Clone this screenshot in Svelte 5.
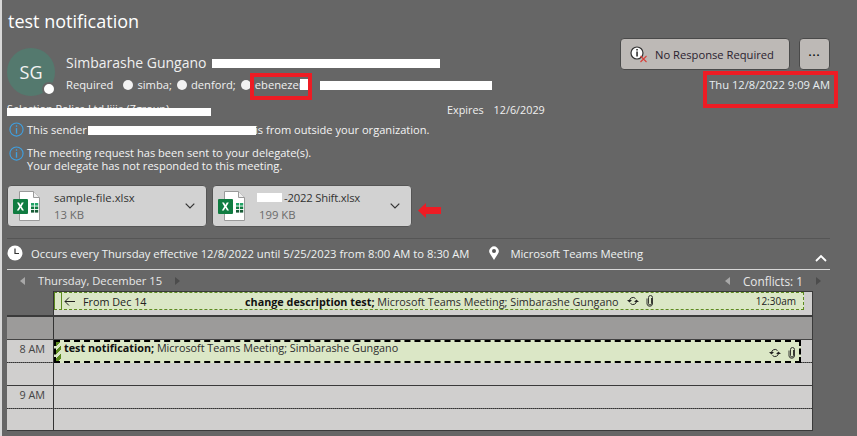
<script lang="ts">
  let redactions = [
    { x: 210, y: 59, w: 228, h: 9 },
    { x: 298, y: 79, w: 9, h: 11 },
    { x: 318, y: 81, w: 172, h: 9 },
    { x: 5, y: 108, w: 204, h: 8 },
    { x: 86, y: 126, w: 168, h: 9 },
    { x: 255, y: 193, w: 25, h: 9 }
  ];
</script>

{#snippet xlsx()}
  <svg class="xl" width="28" height="32" viewBox="0 0 28 32">
    <path d="M6.5 1.5h14l6 6v23h-20z" fill="#fff" stroke="#9a9a9a" />
    <path d="M20.5 1.5v6h6" fill="#eee" stroke="#9a9a9a" />
    <rect x="18" y="13" width="3.2" height="2.6" fill="#21a366" />
    <rect x="22" y="13" width="3.2" height="2.6" fill="#21a366" />
    <rect x="18" y="16.5" width="3.2" height="2.6" fill="#107c41" />
    <rect x="22" y="16.5" width="3.2" height="2.6" fill="#107c41" />
    <rect x="18" y="20" width="3.2" height="2.6" fill="#185c37" />
    <rect x="22" y="20" width="3.2" height="2.6" fill="#185c37" />
    <rect x="0" y="9" width="15" height="15" rx="1" fill="#107c41" />
    <path d="M4 12.5l2.3 4-2.5 4h2l1.6-2.8 1.6 2.8h2l-2.5-4 2.3-4h-2l-1.4 2.6-1.4-2.6z" fill="#fff" />
  </svg>
{/snippet}

{#snippet chevron()}
  <svg class="chev" width="10" height="6" viewBox="0 0 10 6"><path d="M.7.7L5 5l4.300-4.300" fill="none" stroke="#333" stroke-width="1.200" /></svg>
{/snippet}

{#snippet recur()}
  <svg class="recur" width="12" height="10" viewBox="0 0 12 10">
    <path d="M2.500 5a3.500 3.500 0 0 1 6-2.500M9.500 5a3.500 3.500 0 0 1-6 2.500" fill="none" stroke="#222" />
    <path d="M0 4h5L2.500 6.500zM7 6h5L9.500 3.500z" fill="#222" />
  </svg>
{/snippet}

{#snippet clip()}
  <svg class="clip" width="8" height="12" viewBox="0 0 8 12">
    <path d="M5.500 3v5.500a1.500 1.500 0 0 1-3 0V2.500a2 2 0 0 1 4 0v6.500a2.800 2.800 0 0 1-5.500 0V3.500" fill="none" stroke="#222" stroke-width=".9" />
  </svg>
{/snippet}

{#snippet info()}
  <svg class="info" width="15" height="15" viewBox="0 0 16 16">
    <circle cx="8" cy="8" r="7" fill="none" stroke="#3f9fe0" stroke-width="1.200" />
    <rect x="7.300" y="3.500" width="1.400" height="1.600" fill="#3f9fe0" />
    <rect x="7.300" y="6.500" width="1.400" height="6" fill="#3f9fe0" />
  </svg>
{/snippet}

<div class="page">
  <h1>test notification</h1>

  <div class="head">
    <div class="avatar">SG<span class="presence"></span></div>
    <div class="people">
      <div class="sender">Simbarashe Gungano</div>
      <div class="required">
        <span class="label">Required</span>
        <span class="dot"></span><span>simba;</span>
        <span class="dot"></span><span>denford;</span>
        <span class="dot"></span><span>ebenezer</span>
      </div>
    </div>
    <div class="actions">
      <div class="buttons">
        <button class="respond">
          <svg width="22" height="20" viewBox="0 0 22 20">
            <circle cx="9" cy="9" r="6" fill="#fff" stroke="#333" stroke-width="1.200" />
            <rect x="8.300" y="5" width="1.500" height="1.500" fill="#222" />
            <rect x="8.300" y="7.500" width="1.500" height="5" fill="#222" />
            <path d="M12.500 12l6 6M18.500 12l-6 6" stroke="#d9403a" stroke-width="1.100" />
          </svg>
          No Response Required
        </button>
        <button class="more" aria-label="More">•••</button>
      </div>
      <div class="sent">Thu 12/8/2022 9:09 AM</div>
    </div>
  </div>

  <div class="expires">
    <span class="delegate">Selection Police Ltd lijja (Zgroup)</span>
    <span>Expires</span><span>12/6/2029</span>
  </div>

  <div class="notice">{@render info()}<span class="pad">This sender</span><span>is from outside your organization.</span></div>
  <div class="notice two">{@render info()}<span>The meeting request has been sent to your delegate(s).<br />Your delegate has not responded to this meeting.</span></div>

  <div class="files">
    <div class="file">
      {@render xlsx()}
      <div class="meta"><div>sample-file.xlsx</div><div class="size">13 KB</div></div>
      {@render chevron()}
    </div>
    <div class="file">
      {@render xlsx()}
      <div class="meta"><div class="indent">-2022 Shift.xlsx</div><div class="size">199 KB</div></div>
      {@render chevron()}
    </div>
    <svg class="arrow" width="24" height="15" viewBox="0 0 24 15"><path d="M0 7.500l8-7.500v4h15v7H8V15z" fill="#ed1c24" /></svg>
  </div>

  <div class="when">
    <svg width="16" height="16" viewBox="0 0 16 16">
      <circle cx="8" cy="8" r="7.500" fill="#fff" />
      <path d="M8 3.500V8.500H12" fill="none" stroke="#333" stroke-width="1.200" />
    </svg>
    <span class="occurs">Occurs every Thursday effective 12/8/2022 until 5/25/2023 from 8:00 AM to 8:30 AM</span>
    <svg class="pin" width="10" height="14" viewBox="0 0 10 14">
      <path d="M5 14L1.200 8A4.700 4.700 0 1 1 8.800 8z" fill="#fff" />
      <circle cx="5" cy="5" r="2" fill="#555" />
    </svg>
    <span>Microsoft Teams Meeting</span>
    <svg class="collapse" width="12" height="8" viewBox="0 0 12 8"><path d="M1 7l5-5 5 5" fill="none" stroke="#fff" stroke-width="1.800" /></svg>
  </div>

  <div class="nav">
    <div class="nav-group">
      <span class="tri left"></span>
      <span>Thursday, December 15</span>
      <span class="tri right"></span>
    </div>
    <div class="nav-group">
      <span class="tri left"></span>
      <span class="conflicts">Conflicts: 1</span>
      <span class="tri right"></span>
    </div>
  </div>

  <div class="cal">
    <div class="row allday">
      <div class="hour blank"></div>
      <div class="slot">
        <div class="banner">
          <span class="stripe"></span>
          <span class="from">
            <svg width="11" height="9" viewBox="0 0 11 9"><path d="M11 4.500H1M5 .5l-4 4 4 4" fill="none" stroke="#222" /></svg>
            From Dec 14
          </span>
          <span class="subject"><b>change description test;</b> Microsoft Teams Meeting; Simbarashe Gungano</span>
          {@render recur()}
          {@render clip()}
          <span class="end">12:30am</span>
        </div>
      </div>
    </div>
    <div class="row gray">
      <div class="hour"></div>
      <div class="slot"></div>
    </div>
    <div class="row hourly first">
      <div class="hour">8 AM</div>
      <div class="slot">
        <div class="event">
          <span class="hatch"></span>
          <span class="subject"><b>test notification;</b> Microsoft Teams Meeting; Simbarashe Gungano</span>
          {@render recur()}
          {@render clip()}
        </div>
      </div>
    </div>
    <div class="row half"><div class="hour"></div><div class="slot"></div></div>
    <div class="row hourly"><div class="hour">9 AM</div><div class="slot"></div></div>
    <div class="row half last"><div class="hour"></div><div class="slot"></div></div>
  </div>

  {#each redactions as r}
    <span class="redact" style="left:{r.x}px;top:{r.y}px;width:{r.w}px;height:{r.h}px"></span>
  {/each}
  <span class="mark ebenezer"></span>
  <span class="mark stamp"></span>
</div>

<style>
  :global(body) {
    margin: 0;
    background: #666;
  }

  .page {
    position: relative;
    box-sizing: border-box;
    width: 857px;
    height: 436px;
    overflow: hidden;
    background: #666;
    border-left: 2px solid #d8d8d8;
    padding: 0 27px 0 5px;
    color: #f0f0f0;
    font-family: "Open Sans", "Noto Sans", sans-serif;
    font-size: 11px;
  }

  h1 {
    margin: 0;
    padding: 8px 0 0 1px;
    height: 32px;
    box-sizing: border-box;
    font-size: 18px;
    line-height: 26px;
    font-weight: 400;
    color: #fff;
  }

  .head {
    display: flex;
    height: 64px;
    padding-top: 8px;
    box-sizing: border-box;
  }

  .avatar {
    position: relative;
    flex: none;
    width: 48px;
    height: 48px;
    margin-top: 8px;
    border-radius: 50%;
    background: #54796e;
    display: flex;
    align-items: center;
    justify-content: center;
    font-size: 18px;
    color: #f2f2f2;
  }

  .presence {
    position: absolute;
    right: -1px;
    bottom: 0;
    width: 10px;
    height: 10px;
    border-radius: 50%;
    background: #fff;
    border: 2px solid #666;
  }

  .people {
    margin-left: 11px;
    padding-top: 14px;
  }

  .sender {
    font-size: 14px;
    line-height: 18px;
  }

  .required {
    display: flex;
    align-items: center;
    gap: 4px;
    margin-top: 5px;
    font-size: 11.2px;
    line-height: 16px;
  }

  .label {
    margin-right: 5px;
  }

  .dot {
    width: 10px;
    height: 10px;
    margin-left: 1px;
    border-radius: 50%;
    background: #f2f2f2;
  }

  .actions {
    margin-left: auto;
    display: flex;
    flex-direction: column;
    align-items: flex-end;
  }

  .buttons {
    display: flex;
    gap: 9px;
    margin-top: -2px;
  }

  button {
    height: 32px;
    border: 1px solid #4a4a4a;
    border-radius: 4px;
    background: #bdb9b6;
    color: #2b2230;
    font: inherit;
    padding: 0;
  }

  .respond {
    width: 170px;
    display: flex;
    align-items: center;
    gap: 5px;
    padding-left: 7px;
    font-size: 11.2px;
  }

  .more {
    width: 31px;
    font-size: 8px;
    letter-spacing: 1px;
    color: #111;
  }

  .sent {
    margin: 7px 0 0 0;
    font-size: 11.2px;
    line-height: 16px;
    color: #e8eef2;
  }

  .expires {
    position: relative;
    display: flex;
    gap: 10px;
    height: 14px;
    padding-left: 440px;
    margin-top: 7px;
    font-size: 10.8px;
    line-height: 14px;
  }

  .delegate {
    position: absolute;
    left: 0;
    top: -1px;
  }

  .notice {
    display: flex;
    align-items: center;
    gap: 3px;
    margin: 5px 0 0 2px;
    font-size: 11.1px;
    line-height: 13px;
    color: #f4f4f4;
  }

  .notice.two {
    align-items: flex-start;
    margin-top: 9px;
  }

  .pad {
    width: 225px;
  }

  .info {
    flex: none;
  }

  .files {
    display: flex;
    align-items: center;
    gap: 5px;
    margin-top: 13px;
  }

  .file {
    box-sizing: border-box;
    width: 200px;
    height: 42px;
    display: flex;
    align-items: center;
    padding: 0 11px 0 5px;
    background: #d2d2d2;
    border: 1px solid #555;
    border-radius: 4px;
    color: #333;
    font-size: 11.3px;
    line-height: 17px;
  }

  .meta {
    flex: 1;
    margin-left: 13px;
  }

  .size {
    color: #6b6b6b;
  }

  .indent {
    padding-left: 25px;
    letter-spacing: -0.2px;
  }

  .arrow {
    margin: 8px 0 0 1px;
  }

  .when {
    display: flex;
    align-items: center;
    height: 32px;
    margin-top: 11px;
    padding-bottom: 2px;
    border-top: 1px solid #555;
    border-bottom: 1px solid #d8d8d8;
    box-sizing: border-box;
    position: relative;
    font-size: 11.25px;
    color: #eef2f2;
  }

  .occurs {
    margin-left: 8px;
  }

  .pin {
    margin: 0 11px 0 20px;
  }

  .collapse {
    position: absolute;
    right: 3px;
    top: 15px;
  }

  .nav {
    display: flex;
    justify-content: space-between;
    align-items: center;
    height: 21px;
    padding: 0 9px 0 13px;
    font-size: 11.2px;
    color: #e8e8e8;
  }

  .nav-group {
    display: flex;
    align-items: center;
    gap: 13px;
  }

  .conflicts {
    font-size: 11.8px;
  }

  .tri {
    width: 0;
    height: 0;
    border-top: 4px solid transparent;
    border-bottom: 4px solid transparent;
  }

  .tri.left {
    border-right: 5px solid #a8a8a8;
  }

  .tri.right {
    border-left: 5px solid #4c4c4c;
  }

  .cal {
    box-sizing: border-box;
    width: 806px;
    border-right: 1px solid #3a3a3a;
    border-bottom: 1px solid #3a3a3a;
    color: #333;
    font-size: 10.8px;
  }

  .row {
    display: flex;
  }

  .hour {
    box-sizing: border-box;
    flex: none;
    width: 47px;
    padding: 0 8px 0 0;
    text-align: right;
    line-height: 17px;
    color: #444;
    background: #d0cfce;
    border-right: 1px solid #333;
  }

  .slot {
    flex: 1;
    min-width: 0;
    background: #d0cfce;
  }

  .allday {
    height: 26px;
    border-bottom: 2px solid #3a3a3a;
    box-sizing: border-box;
  }

  .allday .slot {
    border-top: 1px solid #3a3a3a;
  }

  .hour.blank {
    background: #666;
  }

  .banner {
    box-sizing: border-box;
    display: flex;
    align-items: center;
    height: 18px;
    margin-right: 8px;
    background: #dbe7c6;
    border: 1px dashed #5c8a1e;
    border-left: 1px solid #5c8a1e;
    color: #222;
  }

  .stripe {
    align-self: stretch;
    width: 6px;
    border-right: 1px solid #5c8a1e;
  }

  .from {
    display: flex;
    align-items: center;
    gap: 8px;
    width: 181px;
    margin-left: 2px;
  }

  .subject {
    color: #2b2b2b;
  }

  .subject b {
    color: #111;
  }

  .banner .recur {
    margin-left: 8px;
  }

  .banner .clip {
    margin-left: 7px;
  }

  .end {
    margin-left: auto;
    padding-right: 7px;
    font-size: 10px;
  }

  .gray {
    height: 23px;
    border-bottom: 1px solid #444;
    box-sizing: border-box;
  }

  .gray .hour,
  .gray .slot {
    background: #9c9b9a;
  }

  .hourly {
    height: 23px;
    border-bottom: 1px dotted #333;
    box-sizing: border-box;
  }

  .half {
    height: 23px;
    border-bottom: 1px solid #3a3a3a;
    box-sizing: border-box;
  }

  .half.last {
    height: 21px;
    border-bottom: 0;
  }

  .event {
    box-sizing: border-box;
    display: flex;
    align-items: center;
    gap: 7px;
    height: 23px;
    margin-right: 11px;
    padding-right: 3px;
    background: #dbe7c6;
    border: 2px dashed #000;
  }

  .hatch {
    align-self: stretch;
    width: 5px;
    background: repeating-linear-gradient(135deg, #5c8a1e 0 3px, #dbe7c6 3px 6px);
  }

  .event .subject {
    flex: 1;
    margin-left: -4px;
    margin-top: -8px;
  }

  .event .recur,
  .event .clip {
    margin-top: 3px;
  }

  .redact {
    position: absolute;
    background: #fff;
  }

  .mark {
    position: absolute;
    box-sizing: border-box;
    border: 4px solid #ed1c24;
  }

  .ebenezer {
    left: 248px;
    top: 73px;
    width: 62px;
    height: 27px;
  }

  .stamp {
    left: 701px;
    top: 71px;
    width: 135px;
    height: 37px;
  }
</style>
